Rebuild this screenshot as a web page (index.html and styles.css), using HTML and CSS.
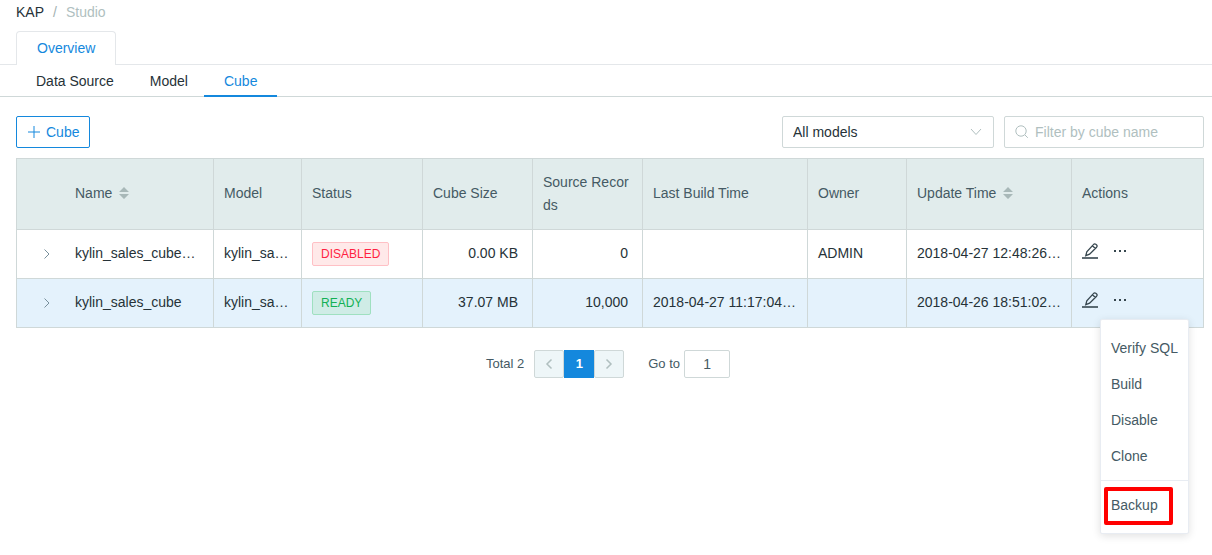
FILE: index.html
```html
<!DOCTYPE html>
<html lang="en">
<head>
<meta charset="utf-8">
<title>KAP Studio</title>
<link rel="stylesheet" href="styles.css">
</head>
<body>
<svg class="sprite" aria-hidden="true">
  <symbol id="chevron" viewBox="0 0 8 12"><path d="M1.5 1.5 6 6 1.5 10.5" fill="none" stroke="currentColor"/></symbol>
  <symbol id="sort" viewBox="0 0 10 12"><path d="M5 0 10 5H0zM5 12 0 7h10z" fill="currentColor"/></symbol>
  <symbol id="pencil" viewBox="0 0 16 16"><path d="M0 15H16" stroke="currentColor" stroke-width="1.6"/><path d="M3.8 12.6 4.8 8.8 11.4 1.6Q12.4.4 13.8 1.2L14.6 1.9Q15.6 3 14.6 4.2L7.6 11.2ZM10.4 2.8 13.4 5.4" fill="none" stroke="currentColor" stroke-width="1.3"/></symbol>
  <symbol id="dots" viewBox="0 0 14 4"><path d="M1 1h2v2H1zM6 1h2v2H6zM11 1h2v2h-2z" fill="currentColor"/></symbol>
</svg>
<nav class="breadcrumb" aria-label="Breadcrumb">
  <a href="#">KAP</a><span class="slash">/</span><span class="current">Studio</span>
</nav>
<nav class="tabs"><a class="tab" href="#">Overview</a></nav>
<nav class="subtabs">
  <a class="subtab" href="#">Data Source</a>
  <a class="subtab" href="#">Model</a>
  <a class="subtab active" href="#">Cube</a>
</nav>
<main class="content">
  <div class="toolbar">
    <button class="add" type="button"><svg width="12" height="12" viewBox="0 0 12 12" aria-hidden="true"><path d="M6 0V12M0 6H12" stroke="currentColor"/></svg>Cube</button>
    <div class="filters">
      <div class="field model">
        <select aria-label="Model"><option>All models</option></select>
        <svg class="arrow" width="12" height="8" viewBox="0 0 12 8" aria-hidden="true"><path d="M1 1 6 6.5 11 1" fill="none" stroke="currentColor"/></svg>
      </div>
      <label class="field search">
        <svg width="14" height="14" viewBox="0 0 14 14" aria-hidden="true"><circle cx="6" cy="6" r="5.2" fill="none" stroke="currentColor"/><path d="M10 10 12.8 12.8" stroke="currentColor"/></svg>
        <input type="text" aria-label="Filter by cube name" placeholder="Filter by cube name">
      </label>
    </div>
  </div>
  <table class="cubes">
    <colgroup><col class="c-expand"><col class="c-name"><col class="c-model"><col class="c-status"><col class="c-size"><col class="c-size"><col class="c-time"><col class="c-owner"><col class="c-time"><col class="c-actions"></colgroup>
    <thead>
      <tr>
        <th class="expand"></th>
        <th>Name<svg class="sort" aria-hidden="true"><use href="#sort"/></svg></th>
        <th>Model</th><th>Status</th><th>Cube Size</th><th>Source Records</th><th>Last Build Time</th><th>Owner</th>
        <th>Update Time<svg class="sort" aria-hidden="true"><use href="#sort"/></svg></th>
        <th>Actions</th>
      </tr>
    </thead>
    <tbody>
      <tr>
        <td class="expand"><button class="icon" type="button" aria-label="Expand"><svg class="chevron"><use href="#chevron"/></svg></button></td>
        <td>kylin_sales_cube…</td><td>kylin_sa…</td>
        <td><span class="tag disabled">DISABLED</span></td>
        <td class="num">0.00 KB</td><td class="num">0</td><td></td><td>ADMIN</td>
        <td>2018-04-27 12:48:26…</td>
        <td class="actions"><div class="action-row"><button class="icon" type="button" aria-label="Edit"><svg class="pencil"><use href="#pencil"/></svg></button><button class="icon" type="button" aria-label="More"><svg class="dots"><use href="#dots"/></svg></button></div></td>
      </tr>
      <tr class="hover">
        <td class="expand"><button class="icon" type="button" aria-label="Expand"><svg class="chevron"><use href="#chevron"/></svg></button></td>
        <td>kylin_sales_cube</td><td>kylin_sa…</td>
        <td><span class="tag ready">READY</span></td>
        <td class="num">37.07 MB</td><td class="num">10,000</td><td>2018-04-27 11:17:04…</td><td></td>
        <td>2018-04-26 18:51:02…</td>
        <td class="actions"><div class="action-row"><button class="icon" type="button" aria-label="Edit"><svg class="pencil"><use href="#pencil"/></svg></button><button class="icon" type="button" aria-label="More"><svg class="dots"><use href="#dots"/></svg></button>
          <div class="menu">
            <button type="button">Verify SQL</button>
            <button type="button">Build</button>
            <button type="button">Disable</button>
            <button type="button">Clone</button>
            <hr>
            <button class="marked" type="button">Backup</button>
          </div></div></td>
      </tr>
    </tbody>
  </table>
  <div class="pagination">
    <span class="total">Total 2</span>
    <div class="pager">
      <button type="button" aria-label="Previous" disabled><svg class="chevron back"><use href="#chevron"/></svg></button>
      <button class="page" type="button">1</button>
      <button type="button" aria-label="Next" disabled><svg class="chevron"><use href="#chevron"/></svg></button>
    </div>
    <label class="goto">Go to<input type="text" value="1"></label>
  </div>
</main>
</body>
</html>
```
FILE: styles.css
```css
* { box-sizing: border-box; }
body {
  min-height: 100vh;
  margin: 0;
  background: #fff;
  color: #263238;
  font: 14px/24px "Liberation Sans", Arial, sans-serif;
}
a { color: inherit; text-decoration: none; }
button, input, select { margin: 0; color: inherit; font: inherit; }
button { cursor: pointer; }
svg { display: block; }
.sprite { display: none; }

.breadcrumb { display: flex; gap: 9px; padding: 0 16px; color: #b0bec5; }
.breadcrumb a { color: #263238; }
.breadcrumb .current { color: #b0bfbf; }
.slash { color: #a3b1b1; }

.tabs { display: flex; margin-top: 7px; padding: 0 16px; border-bottom: 1px solid #e4e7ea; }
.tab {
  margin-bottom: -1px;
  padding: 4px 20px 5px;
  border: 1px solid #e4e7ea;
  border-bottom: 0;
  border-radius: 4px 4px 0 0;
  background: #fff;
  color: #1488dd;
}
.subtabs { display: flex; padding-left: 20px; border-bottom: 1px solid #cfd8d8; }
.subtab { margin: 0 0 -1px -4px; padding: 4px 20px 2px; border-bottom: 2px solid transparent; }
.subtab.active { border-color: #1488dd; color: #1488dd; }

.content { padding: 19px 8px 0 16px; }
.toolbar { display: flex; justify-content: space-between; margin-bottom: 10px; }
.add {
  display: flex;
  align-items: center;
  gap: 6px;
  height: 32px;
  padding: 0 10px 0 11px;
  border: 1px solid #1488dd;
  border-radius: 2px;
  background: #fff;
  color: #1488dd;
}
.filters { display: flex; gap: 10px; }
.field {
  display: flex;
  align-items: center;
  height: 32px;
  border: 1px solid #cfd8d8;
  border-radius: 2px;
  color: #b0bfbf;
}
.model { position: relative; width: 212px; }
.model select {
  width: 100%;
  height: 30px;
  padding: 0 10px;
  border: 0;
  background: transparent;
  color: #263238;
  appearance: none;
}
.arrow { position: absolute; right: 11px; pointer-events: none; }
.search { gap: 6px; width: 200px; padding: 0 10px; }
.search svg { flex: none; }
.search input { flex: 1; min-width: 0; padding: 0; border: 0; background: transparent; color: #263238; }
.search input::placeholder { color: #b0bfbf; opacity: 1; }

.cubes {
  width: 100%;
  border: solid #cfd8d8;
  border-width: 1px 0 0 1px;
  border-spacing: 0;
  table-layout: fixed;
}
.c-expand { width: 48px; }
.c-name { width: 149px; }
.c-model { width: 88px; }
.c-status { width: 121px; }
.c-size { width: 110px; }
.c-time { width: 165px; }
.c-owner { width: 99px; }
.c-actions { width: 132px; }
.cubes th, .cubes td {
  padding: 0 10px;
  border: solid #cfd8d8;
  border-width: 0 1px 1px 0;
}
.cubes th {
  height: 71px;
  padding-bottom: 1px;
  background: #e1ecec;
  color: #455a64;
  font-weight: 400;
  line-height: 23px;
  text-align: left;
  word-break: break-all;
}
.cubes td {
  height: 49px;
  padding-bottom: 2px;
  overflow: hidden;
  text-overflow: ellipsis;
  white-space: nowrap;
}
.cubes .expand { padding: 2px 14px 0 26px; border-right: 0; }
.cubes .num { padding-right: 14px; text-align: right; }
.cubes .actions { overflow: visible; }
.hover td { background: #e4f2fc; }
.sort { display: inline-block; width: 10px; height: 12px; margin-left: 7px; color: #a8b8b8; vertical-align: -1px; }
.icon { padding: 0; border: 0; background: transparent; color: #37474f; }
.chevron { width: 8px; height: 12px; color: #78909c; }
.tag {
  display: inline-block;
  height: 24px;
  padding: 0 8px;
  border: 1px solid;
  border-radius: 2px;
  font-size: 12px;
  line-height: 22px;
  vertical-align: middle;
}
.disabled { border-color: #ffc0c5; background: #ffe9e9; color: #ff1f42; }
.ready { border-color: #9fe0c0; background: #cfece6; color: #12b055; }
.action-row { position: relative; display: flex; align-items: center; gap: 15px; padding-bottom: 4px; }
.pencil { width: 16px; height: 16px; }
.dots { width: 14px; height: 4px; }

.menu {
  position: absolute;
  z-index: 2;
  top: 27px;
  left: 18px;
  padding: 10px 0;
  border: 1px solid #e8ecf2;
  border-radius: 2px;
  background: #fff;
  box-shadow: 0 2px 8px rgba(0, 0, 0, .12);
}
.menu button {
  display: block;
  width: 100%;
  height: 36px;
  padding: 0 10px;
  border: 0;
  background: transparent;
  color: #455a64;
  text-align: left;
}
.menu hr { height: 1px; margin: 6px 0; border: 0; background: #e8ecf2; }
.menu .marked { position: relative; }
.marked::after {
  position: absolute;
  inset: 0 15px -2px 3px;
  border: 4px solid #f00;
  border-radius: 2px;
  content: "";
}

.pagination {
  display: flex;
  align-items: center;
  justify-content: center;
  margin: 22px 4px 0 0;
  color: #455a64;
  font-size: 13px;
}
.total { margin-right: 10px; }
.pager { display: flex; }
.pager button {
  display: flex;
  align-items: center;
  justify-content: center;
  width: 30px;
  height: 28px;
  padding: 0;
  border: 1px solid #cfd8d8;
  border-radius: 2px;
  background: #eef6f8;
}
.pager .page { border-color: #1488dd; border-radius: 0; background: #1488dd; color: #fff; font-weight: 700; }
.pager .chevron { color: #b0bfbf; stroke-width: 1.5; }
.back { transform: rotate(180deg); }
.goto { display: flex; align-items: center; gap: 4px; margin-left: 24px; }
.goto input {
  width: 46px;
  height: 28px;
  padding: 0;
  border: 1px solid #cfd8d8;
  border-radius: 2px;
  font-size: 14px;
  text-align: center;
}
```
